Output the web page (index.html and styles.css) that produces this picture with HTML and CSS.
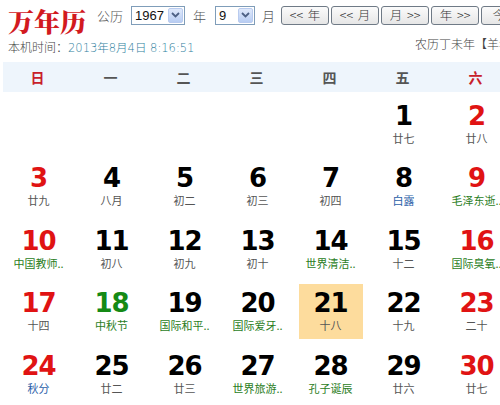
FILE: index.html
```html
<!DOCTYPE html>
<html lang="zh-CN">
<head>
<meta charset="utf-8">
<title>万年历</title>
<link rel="stylesheet" href="styles.css">
</head>
<body>
<div class="page">
  <div class="toolbar">
    <div class="title">万年历</div>
    <span class="lbl lbl-gl">公历</span>
    <div class="sel sel-year"><span class="sel-val">1967</span><span class="sel-btn"><svg width="9" height="6" viewBox="0 0 9 6"><path d="M1 1 L4.5 4.5 L8 1" fill="none" stroke="#4d6185" stroke-width="1.8"/></svg></span></div>
    <span class="lbl lbl-y">年</span>
    <div class="sel sel-month"><span class="sel-val">9</span><span class="sel-btn"><svg width="9" height="6" viewBox="0 0 9 6"><path d="M1 1 L4.5 4.5 L8 1" fill="none" stroke="#4d6185" stroke-width="1.8"/></svg></span></div>
    <span class="lbl lbl-m">月</span>
    <div class="btns">
      <button class="btn">&lt;&lt; 年</button>
      <button class="btn">&lt;&lt; 月</button>
      <button class="btn">月 &gt;&gt;</button>
      <button class="btn">年 &gt;&gt;</button>
      <button class="btn">今天</button>
    </div>
  </div>
  <div class="infoline">
    <div class="now">本机时间：<span class="now-time">2013年8月4日 8:16:51</span></div>
    <div class="lunar-year">农历丁未年【羊年】</div>
  </div>
  <div class="weekhead">
    <div class="wd red">日</div>
    <div class="wd">一</div>
    <div class="wd">二</div>
    <div class="wd">三</div>
    <div class="wd">四</div>
    <div class="wd">五</div>
    <div class="wd red">六</div>
  </div>
  <div class="grid">
    <div class="cell empty"></div>
    <div class="cell empty"></div>
    <div class="cell empty"></div>
    <div class="cell empty"></div>
    <div class="cell empty"></div>
    <div class="cell"><div class="box"><div class="num">1</div><div class="lun">廿七</div></div></div>
    <div class="cell"><div class="box"><div class="num red">2</div><div class="lun">廿八</div></div></div>

    <div class="cell"><div class="box"><div class="num red">3</div><div class="lun">廿九</div></div></div>
    <div class="cell"><div class="box"><div class="num">4</div><div class="lun">八月</div></div></div>
    <div class="cell"><div class="box"><div class="num">5</div><div class="lun">初二</div></div></div>
    <div class="cell"><div class="box"><div class="num">6</div><div class="lun">初三</div></div></div>
    <div class="cell"><div class="box"><div class="num">7</div><div class="lun">初四</div></div></div>
    <div class="cell"><div class="box"><div class="num">8</div><div class="lun term">白露</div></div></div>
    <div class="cell"><div class="box"><div class="num red">9</div><div class="lun fest">毛泽东逝..</div></div></div>

    <div class="cell"><div class="box"><div class="num red">10</div><div class="lun fest">中国教师..</div></div></div>
    <div class="cell"><div class="box"><div class="num">11</div><div class="lun">初八</div></div></div>
    <div class="cell"><div class="box"><div class="num">12</div><div class="lun">初九</div></div></div>
    <div class="cell"><div class="box"><div class="num">13</div><div class="lun">初十</div></div></div>
    <div class="cell"><div class="box"><div class="num">14</div><div class="lun fest">世界清洁..</div></div></div>
    <div class="cell"><div class="box"><div class="num">15</div><div class="lun">十二</div></div></div>
    <div class="cell"><div class="box"><div class="num red">16</div><div class="lun fest">国际臭氧..</div></div></div>

    <div class="cell"><div class="box"><div class="num red">17</div><div class="lun">十四</div></div></div>
    <div class="cell"><div class="box"><div class="num green">18</div><div class="lun fest">中秋节</div></div></div>
    <div class="cell"><div class="box"><div class="num">19</div><div class="lun fest">国际和平..</div></div></div>
    <div class="cell"><div class="box"><div class="num">20</div><div class="lun fest">国际爱牙..</div></div></div>
    <div class="cell"><div class="box today"><div class="num">21</div><div class="lun">十八</div></div></div>
    <div class="cell"><div class="box"><div class="num">22</div><div class="lun">十九</div></div></div>
    <div class="cell"><div class="box"><div class="num red">23</div><div class="lun">二十</div></div></div>

    <div class="cell"><div class="box"><div class="num red">24</div><div class="lun term">秋分</div></div></div>
    <div class="cell"><div class="box"><div class="num">25</div><div class="lun">廿二</div></div></div>
    <div class="cell"><div class="box"><div class="num">26</div><div class="lun">廿三</div></div></div>
    <div class="cell"><div class="box"><div class="num">27</div><div class="lun fest">世界旅游..</div></div></div>
    <div class="cell"><div class="box"><div class="num">28</div><div class="lun fest">孔子诞辰</div></div></div>
    <div class="cell"><div class="box"><div class="num">29</div><div class="lun">廿六</div></div></div>
    <div class="cell"><div class="box"><div class="num red">30</div><div class="lun">廿七</div></div></div>
  </div>
</div>
</body>
</html>
```
FILE: styles.css
```css
html, body {
  margin: 0;
  padding: 0;
  overflow: hidden;
  background: #fff;
}
body {
  font-family: "Liberation Sans", "Noto Sans CJK SC", sans-serif;
  color: #444;
}
.page {
  width: 560px;
}
.toolbar {
  display: flex;
  align-items: center;
  height: 28px;
  padding-top: 1px;
  padding-left: 8px;
}
.title {
  font-family: "Noto Serif CJK SC", "Noto Sans CJK SC", serif;
  font-weight: 900;
  font-size: 26px;
  line-height: 24px;
  color: #d21a1f;
  width: 82px;
  margin-top: 12px;
}
.lbl {
  font-size: 13px;
  color: #555;
  font-family: "Noto Sans CJK SC", sans-serif;
  font-weight: 300;
}
.lbl-gl { margin-left: 7px; }
.lbl-y { margin-left: 8px; }
.lbl-m { margin-left: 7px; }
.sel {
  display: flex;
  align-items: center;
  height: 19px;
  box-sizing: border-box;
  border: 1px solid #7f9db9;
  background: #fff;
  margin-left: 8px;
}
.sel-year { width: 54px; }
.sel-month { width: 40px; margin-left: 9px; }
.sel-val {
  flex: 1;
  font-size: 13px;
  color: #111;
  padding-left: 3px;
  font-family: "Liberation Sans", sans-serif;
}
.sel-btn {
  width: 15px;
  height: 15px;
  margin-right: 1px;
  background: linear-gradient(#dfe9fb, #b8cdf3);
  border: 1px solid #b9cbef;
  box-sizing: border-box;
  border-radius: 2px;
  display: flex;
  align-items: center;
  justify-content: center;
}
.btns {
  display: flex;
  gap: 2px;
  margin-left: 6px;
}
.btn {
  width: 48px;
  height: 19px;
  padding: 0;
  box-sizing: border-box;
  border: 1px solid #6f7a86;
  border-radius: 3px;
  background: linear-gradient(#fbfbfb, #e6e6e6);
  font-family: "Noto Sans CJK SC", sans-serif;
  font-weight: 300;
  font-size: 12.5px;
  line-height: 16px;
  color: #333;
  white-space: nowrap;
  word-spacing: 2px;
}
.infoline {
  display: grid;
  grid-template-columns: 407px auto;
  padding-left: 8px;
  margin-top: 10px;
  height: 16px;
  font-size: 12px;
  line-height: 16px;
  white-space: nowrap;
}
.now {
  color: #444;
  font-family: "Noto Sans CJK SC", sans-serif;
  font-weight: 300;
}
.now-time {
  color: #2f7fa0;
  font-family: "DejaVu Sans", "Noto Sans CJK SC", sans-serif;
  font-size: 11.5px;
}
.lunar-year {
  color: #444;
  font-family: "Noto Sans CJK SC", sans-serif;
  font-weight: 300;
  margin-top: -3px;
}
.weekhead {
  display: grid;
  grid-template-columns: repeat(7, 73px);
  margin-top: 7px;
  margin-left: 3px;
  height: 30px;
  background: #eef5fc;
  align-items: center;
}
.wd {
  text-align: center;
  font-family: "Noto Sans CJK SC", sans-serif;
  font-weight: 700;
  font-size: 14px;
  color: #555;
  padding-right: 4px;
}
.wd.red { color: #c8202a; }
.grid {
  display: grid;
  grid-template-columns: repeat(7, 73px);
  grid-auto-rows: 62.5px;
  margin-left: 2px;
  margin-top: 1px;
}
.cell {
  display: flex;
  align-items: center;
  justify-content: center;
}
.box {
  width: 64px;
  height: 55px;
  box-sizing: border-box;
  padding-top: 5px;
  text-align: center;
}
.box.today {
  background: #fddc9d;
}
.num {
  font-family: "DejaVu Sans", sans-serif;
  font-weight: 700;
  font-size: 26px;
  line-height: 28px;
  color: #000;
  letter-spacing: -1px;
}
.num.red { color: #e01313; }
.num.green { color: #158a15; }
.lun {
  font-family: "Noto Sans CJK SC", sans-serif;
  font-size: 11px;
  line-height: 14px;
  margin-top: 1px;
  color: #555;
  white-space: nowrap;
}
.lun.fest { color: #2a7d1c; }
.lun.term { color: #2b60a8; }
```
